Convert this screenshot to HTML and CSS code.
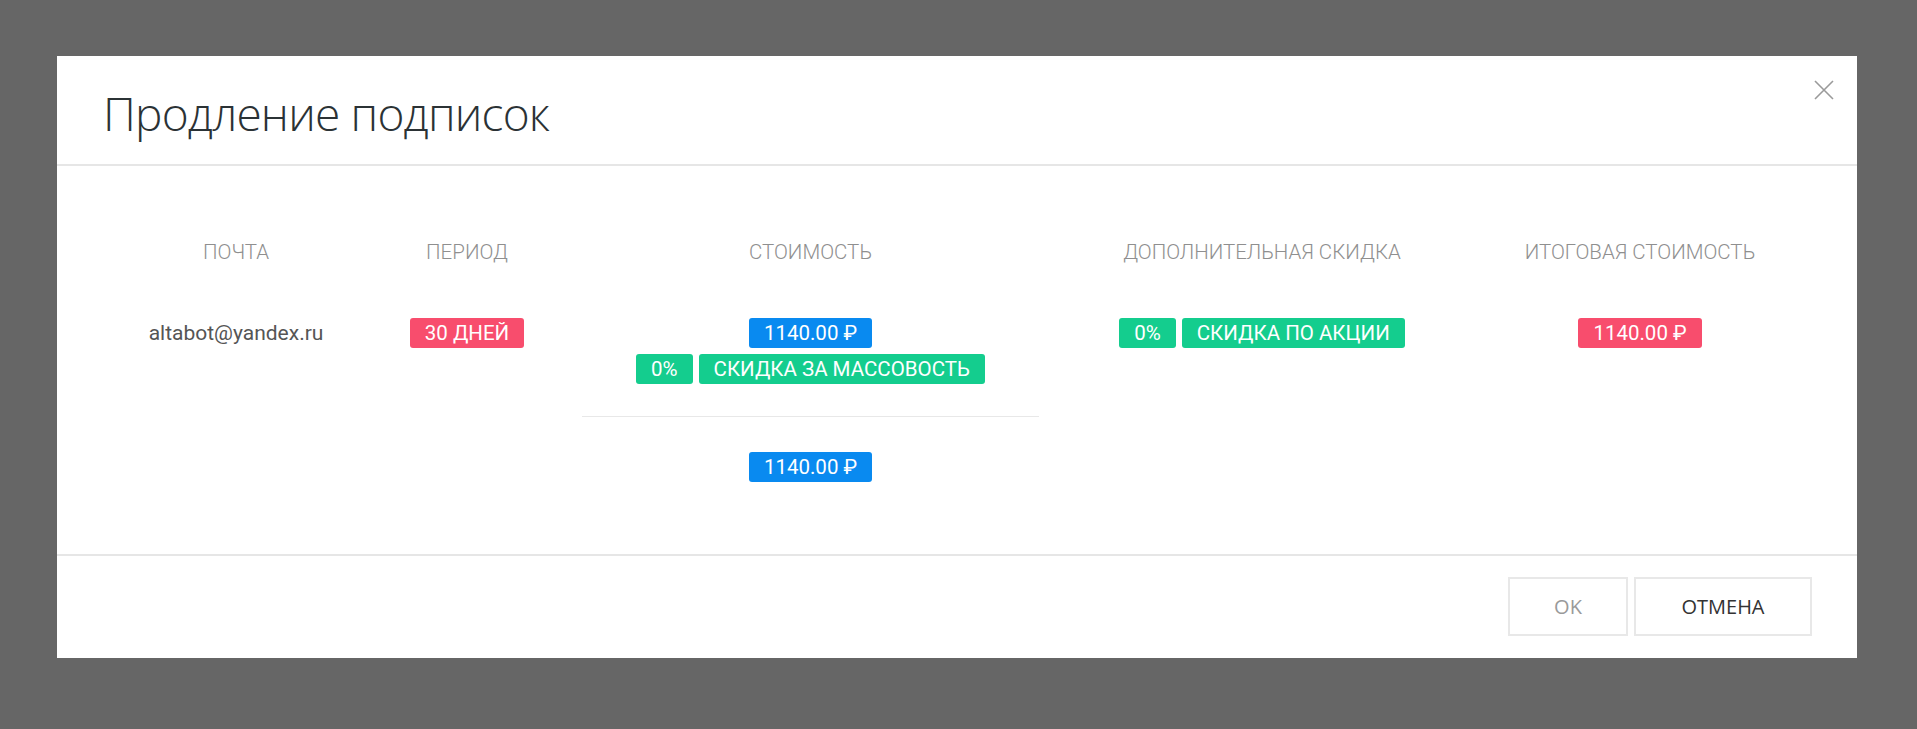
FILE: index.html
```html
<!DOCTYPE html>
<html lang="ru">
<head>
<meta charset="utf-8">
<title>Продление подписок</title>
<link rel="stylesheet" href="styles.css">
</head>
<body>
<div class="overlay">
  <div class="modal">
    <div class="modal-header">
      <h1 class="modal-title">Продление подписок</h1>
      <button class="close" aria-label="Закрыть">
        <svg width="20" height="20" viewBox="0 0 20 20"><path d="M1 1L19 19M19 1L1 19" stroke="#9a9a9a" stroke-width="1.6" fill="none"/></svg>
      </button>
    </div>
    <div class="modal-body">
      <div class="grid">
        <div class="th">Почта</div>
        <div class="th">Период</div>
        <div class="th">Стоимость</div>
        <div class="th">Дополнительная скидка</div>
        <div class="th">Итоговая стоимость</div>

        <div class="td email">altabot@yandex.ru</div>
        <div class="td"><span class="badge red">30 дней</span></div>
        <div class="td cost">
          <div class="stack">
            <div class="line"><span class="badge blue">1140.00 ₽</span></div>
            <div class="line"><span class="badge green">0%</span><span class="badge green">Скидка за массовость</span></div>
          </div>
          <div class="sep"></div>
          <div class="line"><span class="badge blue">1140.00 ₽</span></div>
        </div>
        <div class="td"><div class="line"><span class="badge green">0%</span><span class="badge green">Скидка по акции</span></div></div>
        <div class="td"><span class="badge red">1140.00 ₽</span></div>
      </div>
    </div>
    <div class="modal-footer">
      <button class="btn btn-ok">OK</button>
      <button class="btn btn-cancel">ОТМЕНА</button>
    </div>
  </div>
</div>
</body>
</html>
```
FILE: styles.css
```css
* { box-sizing: border-box; }
html, body { margin: 0; padding: 0; }
body {
  background: #666666;
  width: 1917px;
  height: 729px;
  overflow: hidden;
  font-family: Roboto, "Noto Sans", sans-serif;
}
.overlay {
  padding: 56px 0 0 57px;
}
.modal {
  position: relative;
  width: 1800px;
  height: 602px;
  background: #ffffff;
  display: flex;
  flex-direction: column;
}
.modal-header {
  height: 110px;
  padding: 33px 0 0 46px;
  border-bottom: 2px solid #e6e6e6;
}
.modal-title {
  margin: 0;
  font-family: "Open Sans", "Noto Sans", sans-serif;
  font-weight: 300;
  font-size: 46px;
  line-height: 48px;
  letter-spacing: -0.8px;
  color: #2b3235;
}
.close {
  position: absolute;
  top: 24px;
  right: 23px;
  width: 20px;
  height: 20px;
  padding: 0;
  border: 0;
  background: none;
}
.close svg { display: block; }
.modal-body {
  flex: 1;
  padding: 74px 58px 0 59px;
}
.grid {
  display: grid;
  grid-template-columns: 240px 222px 465px 438px 318px;
  row-gap: 54px;
}
.th {
  text-align: center;
  font-size: 20.5px;
  font-weight: 300;
  line-height: 24px;
  color: #8f8f8f;
  text-transform: uppercase;
}
.td {
  display: flex;
  flex-direction: column;
  align-items: center;
}
.email {
  font-size: 21px;
  line-height: 30px;
  color: #555555;
}
.stack {
  display: flex;
  flex-direction: column;
  gap: 6px;
  align-items: center;
}
.line {
  display: flex;
  justify-content: center;
  gap: 6px;
}
.sep {
  align-self: stretch;
  height: 1px;
  background: #e8e8e8;
  margin: 32px 4px 35px;
}
.badge {
  display: inline-block;
  height: 30px;
  line-height: 30px;
  padding: 0 15px;
  border-radius: 3px;
  font-size: 20.5px;
  color: #ffffff;
  text-transform: uppercase;
  white-space: nowrap;
}
.blue { background: #098af0; }
.green { background: #14cd8e; }
.red { background: #f84d6d; }
.modal-footer {
  height: 104px;
  border-top: 2px solid #e6e6e6;
  display: flex;
  justify-content: flex-end;
  align-items: flex-start;
  gap: 6px;
  padding: 21px 45px 0 0;
}
.btn {
  height: 59px;
  border: 2px solid #e8e8e8;
  background: #ffffff;
  font-family: "Open Sans", "Noto Sans", sans-serif;
  font-size: 20px;
  padding: 0;
}
.btn-ok { width: 120px; color: #9a9a9a; }
.btn-cancel { width: 178px; color: #333333; }
```
